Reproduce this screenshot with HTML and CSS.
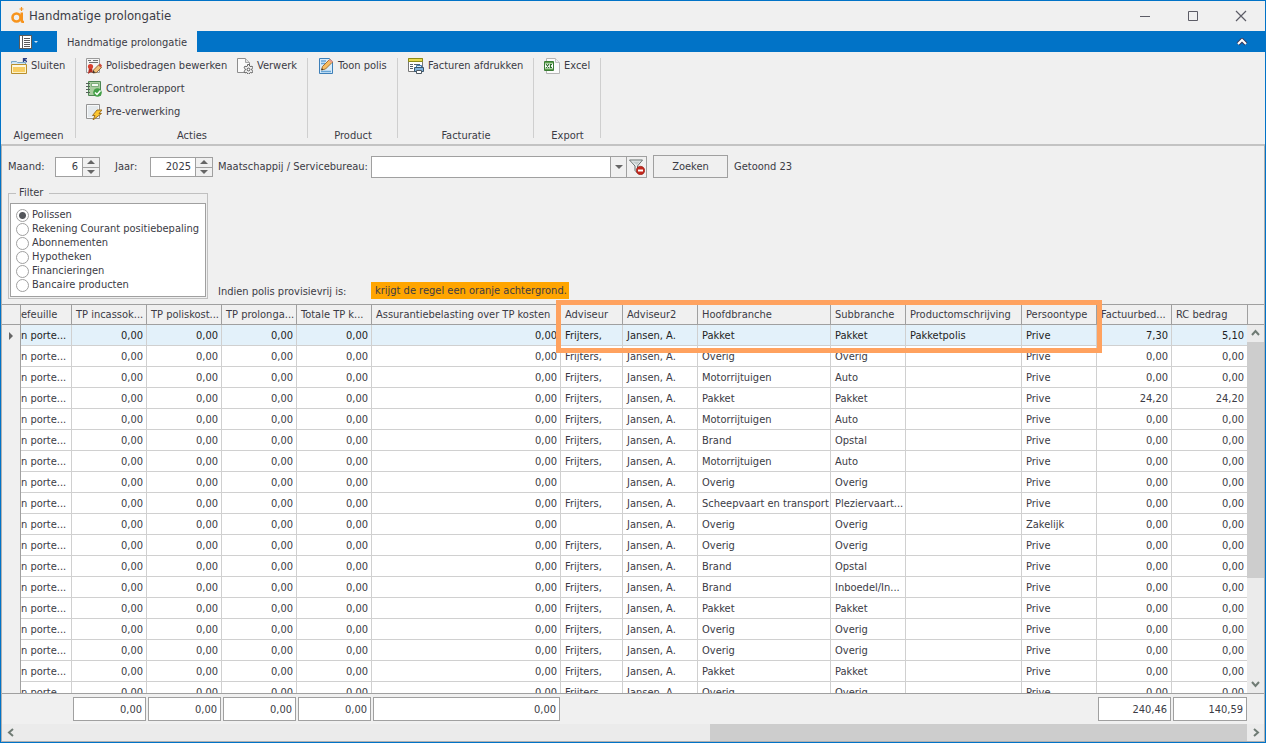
FILE: index.html
```html
<!DOCTYPE html>
<html lang="nl">
<head>
<meta charset="UTF-8">
<meta name="viewport" content="width=device-width, initial-scale=1.0">
<title>Handmatige prolongatie</title>
<link rel="stylesheet" href="styles.css">
</head>
<body>

<div class="window">
    <header class="titlebar">
        <svg class="logo" width="14" height="18" viewBox="0 0 14 18">
            <circle cx="5.500" cy="10.500" r="4" fill="none" stroke="#f7941d" stroke-width="2.600"/>
            <path d="M9.500 5.500h2.500v7.500q0 1 1 1v2h-1.500q-2 0-2-2z" fill="#f7941d"/>
            <path d="M10.500 0v4M8.500 2h4" stroke="#f7941d" stroke-width="1.200"/>
        </svg>
        <h1>Handmatige prolongatie</h1>
        <div class="window-buttons">
            <button type="button" aria-label="Minimaliseren"><svg width="12" height="12" viewBox="0 0 12 12"><path d="M1 6.500h10" stroke="#5c5c66"/></svg></button>
            <button type="button" aria-label="Maximaliseren"><svg width="12" height="12" viewBox="0 0 12 12"><path d="M1.500 1.500h9v9h-9z" fill="none" stroke="#5c5c66"/></svg></button>
            <button type="button" aria-label="Afsluiten"><svg width="12" height="12" viewBox="0 0 12 12"><path d="M1 1l10 10M11 1L1 11" stroke="#5c5c66" stroke-width="1.200"/></svg></button>
        </div>
    </header>

    <nav class="tabs">
        <button type="button" class="app-button" aria-label="Menu">
            <svg width="20" height="14" viewBox="0 0 20 14">
                <path d="M0 0h13v14H0z" fill="#5a5a5a"/>
                <path d="M1 1h2v12H1zM4 1h8v12H4z" fill="#fff"/>
                <path d="M5 3.500h6M5 5.500h6M5 7.500h6M5 9.500h6M5 11.500h6" stroke="#5a5a5a"/>
                <path d="M15 6h4l-2 2z" fill="#cfe3f3"/>
            </svg>
        </button>
        <button type="button" class="tab">Handmatige prolongatie</button>
        <button type="button" class="collapse" aria-label="Lint inklappen">
            <svg width="12" height="8" viewBox="0 0 12 8"><path d="M2 6l4-4 4 4" fill="none" stroke="#3a3a5c" stroke-width="4"/><path d="M2 6l4-4 4 4" fill="none" stroke="#fff" stroke-width="2"/></svg>
        </button>
    </nav>

    <div class="ribbon">
        <section class="group">
            <div class="commands">
                <button type="button">
                    <svg width="16" height="16" viewBox="0 0 16 16">
                        <path d="M.5 5.500V3.500h5l1 1h8v2" fill="#cfe6f5" stroke="#7aa7c7"/>
                        <path d="M.5 6.500h15v9H.5z" fill="#fdf3c8" stroke="#b98f2e"/>
                        <path d="M2 9h12v5H2z" fill="#f8cd62"/>
                        <path d="M2 8h12" stroke="#fff"/>
                        <path d="M12 .5h4M12.500 0v4M13 1l3 3" stroke="#2c3f86" stroke-width="1.300"/>
                    </svg>
                    Sluiten
                </button>
            </div>
            <h2>Algemeen</h2>
        </section>

        <section class="group">
            <div class="commands two-columns">
                <button type="button">
                    <svg width="16" height="16" viewBox="0 0 16 16">
                        <path d="M.5.5h13v14H.5z" fill="#f4f4f4" stroke="#9a9a9a"/>
                        <path d="M2 2.500h3M7 2.500h5M3 4.500h9" stroke="#6f6f6f"/>
                        <path d="M3 10l-1 6 3-2 2 1-1-5z" fill="#b32c22"/>
                        <circle cx="4.500" cy="8.500" r="2.600" fill="#d8402f"/>
                        <path d="M7.500 12l5-5 3 2.500-5 5-3.500.5z" fill="#f0c078" stroke="#7d4f1f" stroke-width=".8"/>
                        <path d="M12.500 7l1.500-1.500 2 2-1 2z" fill="#cf4b3a"/>
                        <path d="M7.300 12.500l2 2-2.500.5z" fill="#2f2f2f"/>
                    </svg>
                    Polisbedragen bewerken
                </button>
                <button type="button">
                    <svg width="16" height="16" viewBox="0 0 16 16">
                        <path d="M.5.500h8l4 4v10H.500z" fill="#fafafa" stroke="#8d8d8d"/>
                        <path d="M8.500.5v4h4" fill="#e3e3e3" stroke="#a5a5a5"/>
                        <path d="M10.500 6.500h2v1.500l1.500.7 1-.7 1 1.800-1.300 1 0 1.400 1.300 1-1 1.800-1.300-.6-1.200.7v1h-2v-1l-1.200-.7-1.300.6-1-1.800 1.300-1V10.800l-1.300-1 1-1.800 1 .7 1.500-.7z" fill="#f1f1f1" stroke="#5a5a5a" stroke-width=".9"/>
                        <circle cx="11.500" cy="11.500" r="1.400" fill="#fff" stroke="#555"/>
                    </svg>
                    Verwerk
                </button>
                <button type="button">
                    <svg width="16" height="16" viewBox="0 0 16 16">
                        <path d="M2.500.500h12v14h-12z" fill="#a9cda0" stroke="#4d8653"/>
                        <path d="M5.500 2.500h7v3h-7z" fill="#f4faf2" stroke="#6ba06a" stroke-width=".8"/>
                        <path d="M0 2.500h4M0 5.500h4M0 8.500h4M0 11.500h4" stroke="#55625a"/>
                        <circle cx="11.500" cy="11.500" r="4.300" fill="#43a047"/>
                        <path d="M9 11.500l2 2 3.500-4" fill="none" stroke="#fff" stroke-width="1.500"/>
                    </svg>
                    Controlerapport
                </button>
                <button type="button" class="new-row">
                    <svg width="16" height="16" viewBox="0 0 16 16">
                        <path d="M.5.500h13v14H.500z" fill="#f6f8f9" stroke="#959595"/>
                        <path d="M2 2h10v11H2z" fill="#e4e9ec"/>
                        <path d="M11 6h5l-3 3.500h2.500L7 16l2-4.500H6.500z" fill="#fcc62f" stroke="#97681a" stroke-width=".9"/>
                    </svg>
                    Pre-verwerking
                </button>
            </div>
            <h2>Acties</h2>
        </section>

        <section class="group">
            <div class="commands">
                <button type="button">
                    <svg width="16" height="16" viewBox="0 0 16 16">
                        <path d="M1.500.500h10l3 3v12h-13z" fill="#d6ebfa" stroke="#3d7fb8"/>
                        <path d="M3 13.500h10M3 3h5M3 5.500h4" stroke="#68a5d6" stroke-width="1.500"/>
                        <path d="M3.500 12l1-3.500 7-7 3 2.500-7 7z" fill="#f6bd62" stroke="#9a6424" stroke-width=".9"/>
                        <path d="M10.500 2.500l1.500-1.500 3 2.500-1.500 1.500z" fill="#e79a8a"/>
                        <path d="M3.300 12.300l.6-2 1.500 1.300z" fill="#333"/>
                    </svg>
                    Toon polis
                </button>
            </div>
            <h2>Product</h2>
        </section>

        <section class="group">
            <div class="commands">
                <button type="button">
                    <svg width="16" height="16" viewBox="0 0 16 16">
                        <path d="M.5.500h14v13H.500z" fill="#fff" stroke="#777"/>
                        <path d="M.5.500h14v3H.500z" fill="#e7d94e" stroke="#8b8b17"/>
                        <path d="M2 6.500h3M6 6.500h6M2 8.500h3M2 10.500h3" stroke="#55606b"/>
                        <path d="M8.500 7.500h5v3h-5z" fill="#d9edfb" stroke="#3f7ab0"/>
                        <path d="M6.500 9.500h9v4h-9z" fill="#7fb2dd" stroke="#39566f"/>
                        <path d="M8.500 12.500h5v3h-5z" fill="#fff" stroke="#4e5963"/>
                    </svg>
                    Facturen afdrukken
                </button>
            </div>
            <h2>Facturatie</h2>
        </section>

        <section class="group">
            <div class="commands">
                <button type="button">
                    <svg width="16" height="16" viewBox="0 0 16 16">
                        <path d="M2.500.500h9l4 4v11h-13z" fill="#fbfbfb" stroke="#b5b5b5"/>
                        <path d="M11.500.500v4h4" fill="#eee" stroke="#c2c2c2"/>
                        <path d="M.5 3.500h9v9h-9z" fill="#fff" stroke="#3b7d35"/>
                        <path d="M1 4h8v1.500H1zM1 10.500h8V12H1z" fill="#5fa14f"/>
                        <path d="M2 6l3 4M5 6l-3 4M6.500 6v3.500H8M8 6.500H6.500" stroke="#2e6e2b" stroke-width="1.200" fill="none"/>
                    </svg>
                    Excel
                </button>
            </div>
            <h2>Export</h2>
        </section>
    </div>

    <main class="content">
        <form class="search" onsubmit="return false">
            <div class="period">
                <label for="month">Maand:</label>
                <div class="spinner month">
                    <input id="month" type="text" inputmode="numeric" value="6">
                    <button type="button" aria-label="Maand omhoog" onclick="step('month', 1)"><i class="up"></i></button>
                    <button type="button" aria-label="Maand omlaag" onclick="step('month', -1)"><i class="down"></i></button>
                </div>
                <label for="year">Jaar:</label>
                <div class="spinner year">
                    <input id="year" type="text" inputmode="numeric" value="2025">
                    <button type="button" aria-label="Jaar omhoog" onclick="step('year', 1)"><i class="up"></i></button>
                    <button type="button" aria-label="Jaar omlaag" onclick="step('year', -1)"><i class="down"></i></button>
                </div>
            </div>
            <label for="company">Maatschappij / Servicebureau:</label>
            <div class="lookup">
                <div class="combo">
                    <input id="company" type="text">
                    <button type="button" aria-label="Lijst openen"><i class="down"></i></button>
                    <button type="button" class="clear" aria-label="Filter wissen">
                        <svg width="16" height="16" viewBox="0 0 16 16">
                            <path d="M.5 1h13L8.500 7v7L6 11.500V7z" fill="#e9eeee" stroke="#66706f"/>
                            <path d="M3 2.500h8L8 6z" fill="#c3cccb"/>
                            <circle cx="11.500" cy="11.500" r="4.200" fill="#c4281d" stroke="#8c1a12" stroke-width=".6"/>
                            <path d="M9 11.500h5" stroke="#fff" stroke-width="2"/>
                        </svg>
                    </button>
                </div>
                <button type="submit" class="submit">Zoeken</button>
                <span>Getoond 23</span>
            </div>

            <fieldset class="filter">
                <legend>Filter</legend>
                <div class="options">
                    <label><input type="radio" name="filter" checked>Polissen</label>
                    <label><input type="radio" name="filter">Rekening Courant positiebepaling</label>
                    <label><input type="radio" name="filter">Abonnementen</label>
                    <label><input type="radio" name="filter">Hypotheken</label>
                    <label><input type="radio" name="filter">Financieringen</label>
                    <label><input type="radio" name="filter">Bancaire producten</label>
                </div>
            </fieldset>
            <span class="hint">Indien polis provisievrij is:</span>
            <span class="hint"><mark>krijgt de regel een oranje achtergrond.</mark></span>
        </form>

        <div class="grid">
            <div class="rows">
                <table>
                    <colgroup>
                        <col class="w-indicator"><col class="w-first">
                        <col class="w-std"><col class="w-std"><col class="w-std"><col class="w-std">
                        <col>
                        <col class="w-adviser"><col class="w-std"><col class="w-branch"><col class="w-std">
                        <col class="w-product"><col class="w-std"><col class="w-std"><col class="w-last">
                        <col class="w-scroll">
                    </colgroup>
                    <thead>
                        <tr>
                            <th></th>
                            <th class="cut">efeuille</th>
                            <th>TP incassok...</th>
                            <th>TP poliskost...</th>
                            <th>TP prolonga...</th>
                            <th>Totale TP k...</th>
                            <th>Assurantiebelasting over TP kosten</th>
                            <th>Adviseur</th>
                            <th>Adviseur2</th>
                            <th>Hoofdbranche</th>
                            <th>Subbranche</th>
                            <th>Productomschrijving</th>
                            <th>Persoontype</th>
                            <th>Factuurbed...</th>
                            <th>RC bedrag</th>
                            <th></th>
                        </tr>
                    </thead>
                    <tbody id="policy-rows">
                        <!-- Policy rows are inserted here -->
                    </tbody>
                </table>
                <div class="scroll-y">
                    <svg width="9" height="18" viewBox="0 0 9 18"><path d="M1 11l3.500-4L8 11" fill="none" stroke="#6f7b74" stroke-width="2"/></svg>
                    <div class="thumb"></div>
                    <svg width="9" height="18" viewBox="0 0 9 18"><path d="M1 7l3.500 4L8 7" fill="none" stroke="#6f7b74" stroke-width="2"/></svg>
                </div>
            </div>
            <div class="highlight"></div>
            <div class="totals">
                <output>0,00</output>
                <output>0,00</output>
                <output>0,00</output>
                <output>0,00</output>
                <output>0,00</output>
                <output class="invoice-total">240,46</output>
                <output>140,59</output>
            </div>
            <div class="scroll-x">
                <svg width="18" height="9" viewBox="0 0 18 9"><path d="M11 1L7 4.500 11 8" fill="none" stroke="#6f7b74" stroke-width="2"/></svg>
                <div class="thumb"></div>
                <svg width="18" height="9" viewBox="0 0 18 9"><path d="M7 1l4 3.500L7 8" fill="none" stroke="#6f7b74" stroke-width="2"/></svg>
            </div>
        </div>
    </main>
</div>

<script>
    // adviseur, hoofdbranche, subbranche, productomschrijving, persoontype, factuurbedrag, rc bedrag
    var policies = [
        ["Frijters,", "Pakket", "Pakket", "Pakketpolis", "Prive", "7,30", "5,10"],
        ["Frijters,", "Overig", "Overig", "", "Prive", "0,00", "0,00"],
        ["Frijters,", "Motorrijtuigen", "Auto", "", "Prive", "0,00", "0,00"],
        ["Frijters,", "Pakket", "Pakket", "", "Prive", "24,20", "24,20"],
        ["Frijters,", "Motorrijtuigen", "Auto", "", "Prive", "0,00", "0,00"],
        ["Frijters,", "Brand", "Opstal", "", "Prive", "0,00", "0,00"],
        ["Frijters,", "Motorrijtuigen", "Auto", "", "Prive", "0,00", "0,00"],
        ["", "Overig", "Overig", "", "Prive", "0,00", "0,00"],
        ["Frijters,", "Scheepvaart en transport", "Pleziervaart...", "", "Prive", "0,00", "0,00"],
        ["", "Overig", "Overig", "", "Zakelijk", "0,00", "0,00"],
        ["Frijters,", "Overig", "Overig", "", "Prive", "0,00", "0,00"],
        ["Frijters,", "Brand", "Opstal", "", "Prive", "0,00", "0,00"],
        ["Frijters,", "Brand", "Inboedel/In...", "", "Prive", "0,00", "0,00"],
        ["Frijters,", "Pakket", "Pakket", "", "Prive", "0,00", "0,00"],
        ["Frijters,", "Overig", "Overig", "", "Prive", "0,00", "0,00"],
        ["Frijters,", "Overig", "Overig", "", "Prive", "0,00", "0,00"],
        ["Frijters,", "Pakket", "Pakket", "", "Prive", "0,00", "0,00"],
        ["Frijters,", "Overig", "Overig", "", "Prive", "0,00", "0,00"]
    ];

    var body = document.getElementById('policy-rows');

    function addCell(row, text, className) {
        var cell = row.insertCell();
        cell.textContent = text;
        if (className) cell.className = className;
        return cell;
    }

    policies.forEach(function(policy, index) {
        var row = body.insertRow();
        var indicator = addCell(row, '', 'indicator');
        if (index === 0) {
            row.className = 'selected';
            indicator.innerHTML = '<i class="right"></i>';
        }
        addCell(row, 'n porte...', 'cut');
        for (var i = 0; i < 5; i++) {
            addCell(row, '0,00', 'amount');
        }
        addCell(row, policy[0]);
        addCell(row, 'Jansen, A.');
        addCell(row, policy[1]);
        addCell(row, policy[2]);
        addCell(row, policy[3]);
        addCell(row, policy[4]);
        addCell(row, policy[5], 'amount');
        addCell(row, policy[6], 'amount');
        addCell(row, '', 'filler');
    });

    // Spin buttons for month and year
    function step(id, delta) {
        var input = document.getElementById(id);
        var value = Number(input.value) + delta;
        if (id === 'month') value = Math.min(12, Math.max(1, value));
        input.value = value;
    }
</script>

</body>
</html>
```
FILE: styles.css
```css
* {
    box-sizing: border-box;
}
body {
    margin: 0;
    font-family: "DejaVu Sans Condensed", "DejaVu Sans", sans-serif;
    font-size: 11px;
    line-height: 14px;
    color: #3b3b45;
    background-color: #f0f0f0;
}
button,
input {
    font: inherit;
    color: inherit;
    margin: 0;
    padding: 0;
    border: none;
    background: none;
}
svg {
    display: block;
    flex: none;
}
.window {
    display: flex;
    flex-direction: column;
    height: 100vh;
    border: 1px solid #0173c7;
}

/* Title bar */
.titlebar {
    display: flex;
    align-items: center;
    height: 30px;
    flex: none;
    padding-left: 10px;
}
.titlebar h1 {
    flex: 1;
    margin: 0 0 0 4px;
    font-size: 13px;
    font-weight: normal;
}
.window-buttons {
    display: flex;
}
.window-buttons button {
    width: 48px;
    height: 30px;
    display: grid;
    place-items: center;
}

/* Tabs */
.tabs {
    display: flex;
    height: 21px;
    flex: none;
    background-color: #0173c7;
}
.app-button {
    width: 56px;
    display: grid;
    place-items: center;
}
.tab {
    width: 140px;
    padding-top: 3px;
    background-color: #f0f0f0;
    white-space: nowrap;
}
.collapse {
    display: grid;
    place-items: center;
    width: 46px;
    margin-left: auto;
}

/* Ribbon */
.ribbon {
    display: grid;
    grid-template-columns: 75px 232px 90px 136px 67px;
    height: 92px;
    flex: none;
    padding-top: 6px;
}
.group {
    display: flex;
    flex-direction: column;
    background: linear-gradient(#cfcfcf, #cfcfcf) right top / 1px 80px no-repeat;
}
.commands {
    display: grid;
    align-content: start;
    row-gap: 7px;
    height: 71px;
    padding-left: 10px;
}
.two-columns {
    grid-template-columns: 151px auto;
}
.new-row {
    grid-column: 1;
}
.commands button {
    display: flex;
    align-items: center;
    gap: 4px;
    height: 16px;
    white-space: nowrap;
}
.group h2 {
    margin: 0;
    font-size: 11px;
    font-weight: normal;
    text-align: center;
}

/* Search form */
.content {
    display: flex;
    flex-direction: column;
    flex: 1;
    min-height: 0;
    border: 1px solid #b0b0b0;
    border-top: 2px solid #c3c3c3;
}
.search {
    display: grid;
    grid-template-columns: 210px 153px auto;
    row-gap: 8px;
    align-items: center;
    padding: 9px 6px 5px;
    white-space: nowrap;
}
.period {
    display: grid;
    grid-template-columns: 47px 60px 35px auto;
    align-items: center;
}
.spinner {
    display: grid;
    grid-template-columns: 1fr 17px;
    grid-template-rows: 9px 9px;
    border: 1px solid #a0a0a0;
}
.month {
    width: 45px;
}
.year {
    width: 63px;
}
.spinner input {
    grid-row: span 2;
    width: 100%;
    height: 18px;
    padding-right: 4px;
    text-align: right;
    background-color: #fff;
}
.spinner button {
    display: grid;
    place-items: center;
    border-left: 1px solid #a0a0a0;
}
.spinner button:last-child {
    border-top: 1px solid #a0a0a0;
}
.up,
.down,
.right {
    display: block;
    width: 0;
    height: 0;
    border: 4px solid transparent;
}
.up {
    border-top: none;
    border-bottom-color: #666;
}
.down {
    border-bottom: none;
    border-top-color: #666;
}
.right {
    border-right: none;
    border-left-color: #666;
    margin: 0 auto;
}
.lookup {
    display: flex;
    align-items: center;
    gap: 6px;
}
.combo {
    display: flex;
    width: 276px;
    height: 22px;
    border: 1px solid #a0a0a0;
}
.combo input {
    flex: 1;
    min-width: 0;
    padding: 0 4px;
    background-color: #fff;
}
.combo button {
    display: grid;
    place-items: center;
    width: 16px;
    border-left: 1px solid #a0a0a0;
}
.combo .clear {
    width: 20px;
}
.submit {
    width: 75px;
    height: 23px;
    border: 1px solid #a0a0a0;
}
.filter {
    width: 200px;
    margin: 0;
    padding: 3px 1px 1px;
    border: 1px solid #c0c0c0;
}
.filter legend {
    margin-left: 6px;
    padding: 0 6px 0 3px;
}
.options {
    padding: 4px 5px;
    border: 1px solid #a0a0a0;
    background-color: #fff;
}
.options label {
    display: flex;
    align-items: center;
    gap: 3px;
    height: 14px;
}
.options input {
    appearance: none;
    flex: none;
    width: 13px;
    height: 13px;
    border: 1px solid #a0a0a0;
    border-radius: 50%;
    background-color: #fff;
}
.options input:checked {
    background: radial-gradient(circle, #55575c 3px, #fff 4px);
}
.hint {
    align-self: end;
}
.hint mark {
    display: inline-block;
    padding: 2px 2px 1px 4px;
    color: inherit;
    background-color: #ffa500;
}

/* Policy grid */
.grid {
    position: relative;
    display: flex;
    flex-direction: column;
    flex: 1;
    min-height: 0;
}
.rows {
    position: relative;
    flex: 1;
    min-height: 0;
    overflow: hidden;
    border-top: 1px solid #a0a0a0;
    border-bottom: 1px solid #a0a0a0;
}
table {
    width: 100%;
    table-layout: fixed;
    border-collapse: separate;
    border-spacing: 0;
}
.w-indicator { width: 19px; }
.w-first { width: 51px; }
.w-std { width: 75px; }
.w-adviser { width: 62px; }
.w-branch { width: 133px; }
.w-product { width: 116px; }
.w-last { width: 76px; }
.w-scroll { width: 16px; }
th,
td {
    height: 21px;
    padding: 2px 3px 0 4px;
    overflow: hidden;
    white-space: nowrap;
    text-align: left;
    border-right: 1px solid #d0d0d0;
    border-bottom: 1px solid #d0d0d0;
    background-color: #fff;
}
th {
    height: 20px;
    padding-top: 1px;
    font-weight: normal;
    background-color: #f0f0f0;
    border-color: #a0a0a0;
}
th:last-child {
    border-right: none;
}
.cut {
    padding-left: 0;
}
.amount {
    text-align: right;
}
.selected td {
    color: #1e1e24;
    background-color: #e3f1fa;
}
.selected td.indicator,
td.indicator {
    padding: 0;
    background-color: #f0f0f0;
    border-right-color: #a0a0a0;
    border-bottom: none;
}
td.filler {
    border: none;
}
.scroll-y {
    position: absolute;
    top: 20px;
    right: 0;
    bottom: 0;
    width: 17px;
    display: grid;
    grid-template-rows: 17px 236px 1fr;
    justify-items: center;
    align-items: end;
    background-color: #ebebeb;
}
.thumb {
    background-color: #cdcdcd;
}
.scroll-y .thumb {
    width: 100%;
    height: 100%;
}
.highlight {
    position: absolute;
    top: -4px;
    right: 162px;
    width: 546px;
    height: 53px;
    border: 5px solid #ffa25f;
    pointer-events: none;
}
.totals {
    display: grid;
    grid-template-columns: 73px 73px 73px 73px 1fr 534px 73px 74px;
    column-gap: 2px;
    height: 30px;
    flex: none;
    padding: 3px 17px 3px 71px;
}
.totals output {
    height: 24px;
    padding: 1px 3px 0;
    line-height: 22px;
    text-align: right;
    border: 1px solid #a0a0a0;
    background-color: #fff;
}
.totals .invoice-total {
    grid-column: 7;
}
.scroll-x {
    display: grid;
    grid-template-columns: 17px 1fr 537px 17px;
    height: 17px;
    flex: none;
    align-items: center;
    background-color: #ebebeb;
}
.scroll-x .thumb {
    grid-column: 3;
    height: 100%;
}
```
